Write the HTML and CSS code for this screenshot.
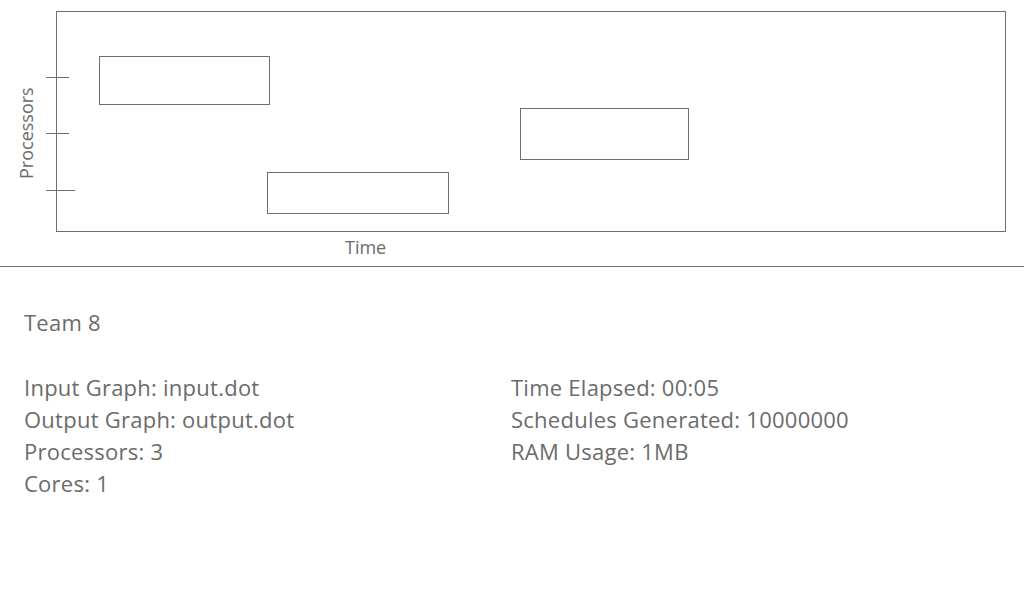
FILE: index.html
```html
<!DOCTYPE html>
<html>
<head>
<meta charset="utf-8">
<link rel="stylesheet" href="styles.css">
</head>
<body>
<section class="chart">
  <div class="plot-row">
    <div class="ylabel">Processors</div>
    <div class="frame">
      <div class="task" style="left:42px;top:44px;width:171px;height:49px"></div>
      <div class="task" style="left:210px;top:160px;width:182px;height:42px"></div>
      <div class="task" style="left:463px;top:96px;width:169px;height:52px"></div>
    </div>
    <span class="tick" style="top:77px;width:23px"></span>
    <span class="tick" style="top:133px;width:23px"></span>
    <span class="tick" style="top:190px;width:29px"></span>
  </div>
  <div class="xlabel">Time</div>
</section>
<section class="info">
  <div class="team">Team 8</div>
  <div class="cols">
    <div class="col">
      <div>Input Graph: input.dot</div>
      <div>Output Graph: output.dot</div>
      <div>Processors: 3</div>
      <div>Cores: 1</div>
    </div>
    <div class="col">
      <div>Time Elapsed: 00:05</div>
      <div>Schedules Generated: 10000000</div>
      <div>RAM Usage: 1MB</div>
    </div>
  </div>
</section>
</body>
</html>
```
FILE: styles.css
```css
html, body {
  margin: 0;
  padding: 0;
  background: #ffffff;
}
body {
  font-family: "Open Sans", "Noto Sans", sans-serif;
  color: #6b6b6b;
  width: 1024px;
  height: 600px;
  overflow: hidden;
}
.chart {
  height: 267px;
  border-bottom: 1px solid #6f6f6f;
  padding-top: 11px;
  box-sizing: border-box;
}
.plot-row {
  position: relative;
  display: flex;
  height: 221px;
}
.ylabel {
  width: 56px;
  display: flex;
  align-items: center;
  justify-content: center;
  padding-left: 5px;
  padding-bottom: 24px;
  box-sizing: border-box;
  writing-mode: vertical-rl;
  transform: rotate(180deg);
  font-size: 18px;
  line-height: 20px;
}
.frame {
  position: relative;
  width: 950px;
  height: 221px;
  border: 1px solid #6f6f6f;
  box-sizing: border-box;
}
.task {
  position: absolute;
  border: 1px solid #6f6f6f;
  box-sizing: border-box;
}
.tick {
  position: absolute;
  left: 46px;
  height: 1px;
  margin-top: -11px;
  background: #6f6f6f;
}
.xlabel {
  padding-left: 345px;
  font-size: 18px;
  line-height: 30px;
}
.info {
  padding: 39px 0 0 24px;
  font-size: 22px;
  line-height: 32px;
  letter-spacing: 0.25px;
}
.team {
  margin-bottom: 33px;
}
.cols {
  display: grid;
  grid-template-columns: 487px 1fr;
}
```
